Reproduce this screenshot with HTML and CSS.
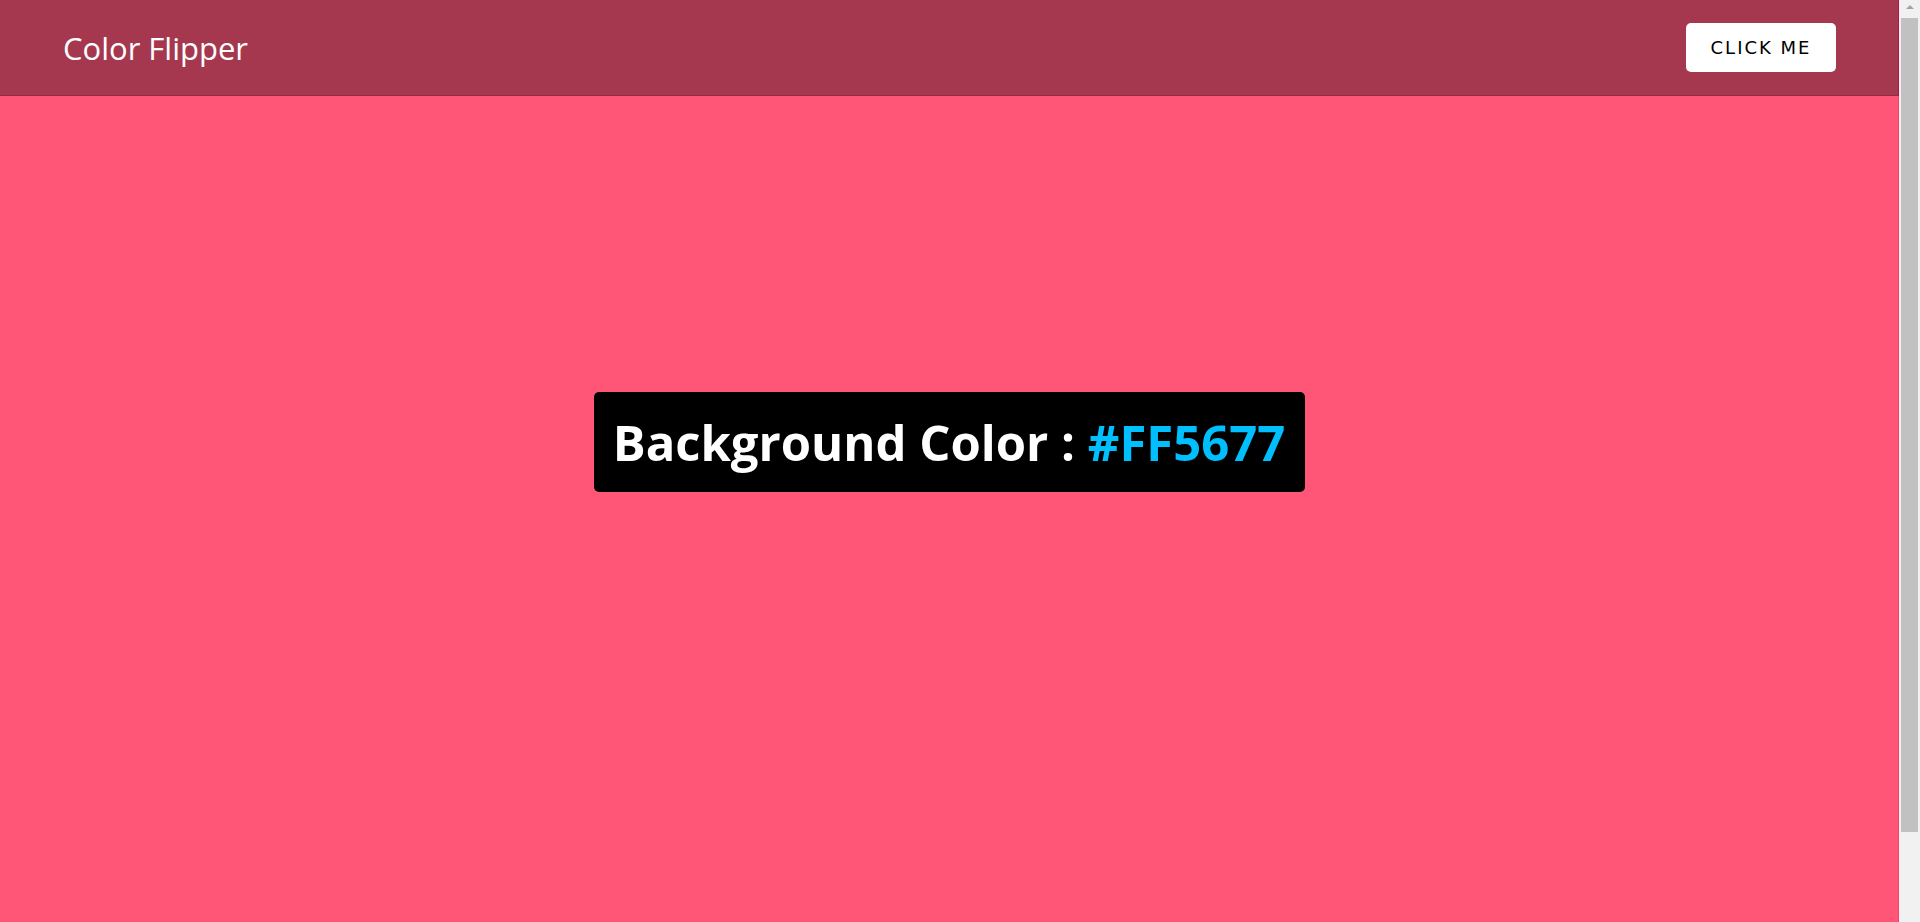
FILE: index.html
```html
<!DOCTYPE html>
<html lang="en">
<head>
<meta charset="UTF-8">
<title>Color Flipper</title>
<link rel="stylesheet" href="styles.css">
</head>
<body>
<div class="page">
  <header class="navbar">
    <h4 class="brand">Color Flipper</h4>
    <button class="btn" type="button">CLICK ME</button>
  </header>
  <main class="stage">
    <h2 class="label">Background Color : <span class="code">#FF5677</span></h2>
  </main>
</div>
<div class="scrollbar" aria-hidden="true">
  <div class="scroll-up"><span class="arrow"></span></div>
  <div class="scroll-thumb"></div>
</div>
</body>
</html>
```
FILE: styles.css
```css
html, body {
  height: 100%;
  overflow: hidden;
}
body {
  margin: 0;
  display: flex;
  background: #f1f1f1;
  font-family: "Open Sans", "Liberation Sans", sans-serif;
}
.page {
  flex: 1;
  display: flex;
  flex-direction: column;
  background: #ff5677;
}
.navbar {
  height: 96px;
  flex-shrink: 0;
  box-sizing: border-box;
  padding: 0 62px 0 63px;
  display: flex;
  align-items: center;
  justify-content: space-between;
  background: #a5384e;
  border-bottom: 1px solid #8f2c42;
  border-right: 1px solid #b5163f;
}
.brand {
  margin: 0;
  color: #fff;
  font-family: "Open Sans", sans-serif;
  font-weight: 500;
  font-size: 31px;
}
.btn {
  width: 150px;
  height: 49px;
  border: none;
  border-radius: 5px;
  background: #fff;
  color: #000;
  font-family: "DejaVu Sans", sans-serif;
  font-size: 18px;
  letter-spacing: 2px;
  padding: 0;
  cursor: pointer;
}
.stage {
  flex: 1;
  display: flex;
  justify-content: center;
  align-items: flex-start;
  padding-top: 296px;
  border-right: 1px solid #ff3d67;
}
.label {
  margin: 0;
  width: 711px;
  height: 100px;
  box-sizing: border-box;
  display: flex;
  align-items: center;
  justify-content: center;
  background: #000;
  border-radius: 5px;
  color: #fff;
  font-family: "Open Sans", sans-serif;
  font-weight: 700;
  font-size: 49px;
  white-space: pre;
}
.code {
  color: #00bfff;
}
.scrollbar {
  width: 21px;
  flex-shrink: 0;
  display: flex;
  flex-direction: column;
  background: #f1f1f1;
}
.scroll-up {
  height: 18px;
  display: flex;
  justify-content: center;
  padding-top: 5px;
  box-sizing: border-box;
}
.arrow {
  width: 0;
  height: 0;
  border-left: 4.5px solid transparent;
  border-right: 4.5px solid transparent;
  border-bottom: 4.5px solid #a3a3a3;
}
.scroll-thumb {
  height: 814px;
  margin: 0 2px;
  background: #c1c1c1;
}
```
